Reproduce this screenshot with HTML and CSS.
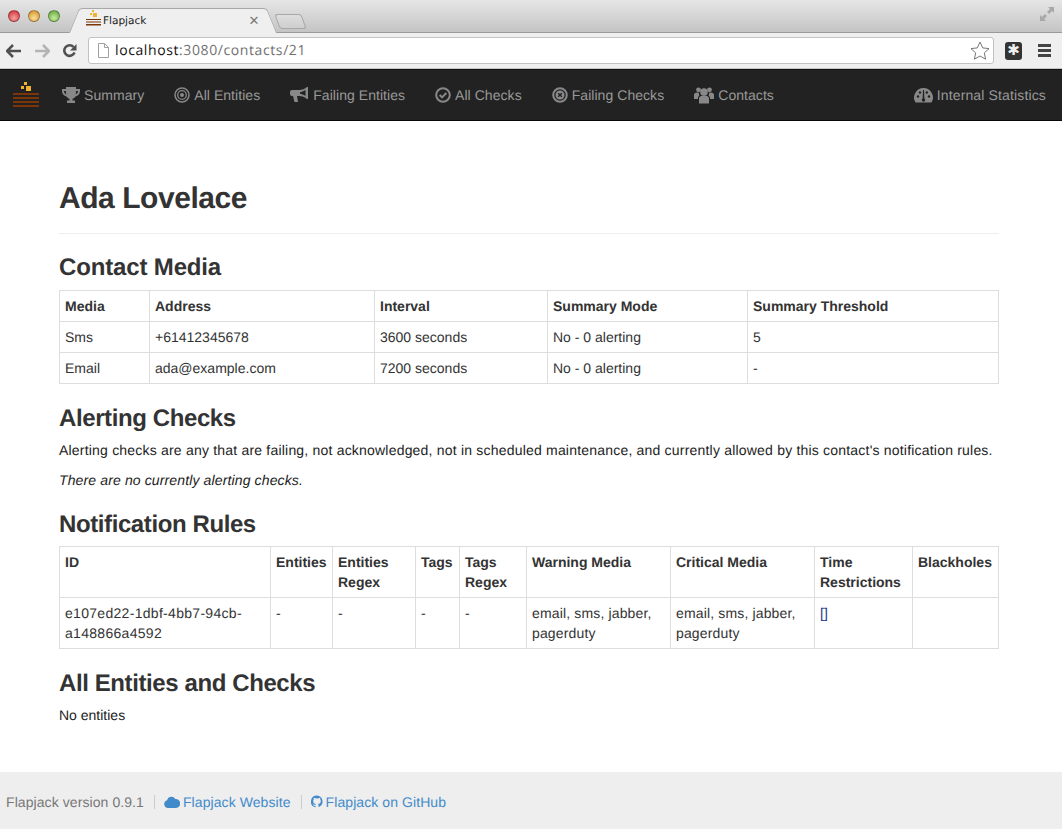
FILE: index.html
```html
<!DOCTYPE html>
<html lang="en">
<head>
    <meta charset="UTF-8">
    <meta name="viewport" content="width=device-width, initial-scale=1.0">
    <title>Flapjack</title>
    <link rel="stylesheet" href="styles.css">
</head>
<body>
    <div class="chrome">
        <div class="tabstrip">
            <div class="lights">
                <span class="light light-red"></span>
                <span class="light light-amber"></span>
                <span class="light light-green"></span>
            </div>
            <div class="tab">
                <svg class="favicon" width="15" height="17" viewBox="0 0 15 17">
                    <rect x="6" y="0" width="2" height="2" fill="#f0b030"/>
                    <rect x="4" y="3" width="2" height="2" fill="#f0b030"/>
                    <rect x="7" y="3" width="4" height="4" fill="#f0b030"/>
                    <rect x="0" y="9" width="15" height="1" fill="#7a3608"/>
                    <rect x="0" y="11.500" width="15" height="1" fill="#7a3608"/>
                    <rect x="0" y="14" width="15" height="1.500" fill="#7a3608"/>
                </svg>
                <span class="tab-title">Flapjack</span>
                <span class="tab-close">×</span>
            </div>
            <div class="newtab"></div>
            <svg class="fullscreen" width="16" height="16" viewBox="0 0 16 16">
                <path d="M9 1h6v6l-2-2-3 3-2-2 3-3zM7 15H1V9l2 2 3-3 2 2-3 3z" fill="#a8a8a8"/>
            </svg>
        </div>
        <div class="toolbar">
            <svg class="tool-btn" width="16" height="14" viewBox="0 0 16 14">
                <path d="M7 1 1 7l6 6M1.500 7H15" fill="none" stroke="#505050" stroke-width="2.600"/>
            </svg>
            <svg class="tool-btn" width="16" height="14" viewBox="0 0 16 14">
                <path d="M9 1l6 6-6 6M14.500 7H1" fill="none" stroke="#b4b4b4" stroke-width="2.600"/>
            </svg>
            <svg class="tool-btn" width="15" height="15" viewBox="0 0 15 15">
                <path d="M12.500 9.500A5.300 5.300 0 1 1 11.500 4" fill="none" stroke="#505050" stroke-width="2.600"/>
                <path d="M14.500 1v6.500H8z" fill="#505050"/>
            </svg>
            <div class="omnibox">
                <svg class="page-icon" width="13" height="15" viewBox="0 0 13 15">
                    <path d="M1.500.500h6l4 4v10h-10zM7.500.500v4h4" fill="#fff" stroke="#a0a0a0"/>
                </svg>
                <span class="url"><span class="url-host">localhost</span>:3080/contacts/21</span>
                <svg class="star" width="20" height="19" viewBox="0 0 20 19">
                    <path d="M10 1l2.700 5.900 6.300.700-4.700 4.300 1.300 6.300L10 15l-5.600 3.200 1.300-6.300L1 7.600l6.300-.700z" fill="#fff" stroke="#777"/>
                </svg>
            </div>
            <div class="ext-icon">✱</div>
            <div class="menu-icon"><span></span><span></span><span></span></div>
        </div>
    </div>

    <nav class="navbar">
        <svg class="brand" width="26" height="26" viewBox="0 0 26 26">
            <rect x="11" y="0" width="3" height="3" fill="#f0b030"/>
            <rect x="8" y="4" width="3" height="3" fill="#f0b030"/>
            <rect x="13" y="4" width="5" height="5" fill="#f0b030"/>
            <rect x="0" y="11" width="26" height="2" fill="#7a3608"/>
            <rect x="0" y="15" width="26" height="2" fill="#7a3608"/>
            <rect x="0" y="19" width="26" height="2" fill="#7a3608"/>
            <rect x="0" y="23" width="26" height="2" fill="#7a3608"/>
        </svg>
        <a class="nav-link nav-summary" href="#">
            <svg width="18" height="16" viewBox="0 0 18 16"><path d="M4 0h10v2h4v2c0 3-2 5-4.500 5.500C12.500 11 11 11.500 10.500 12v1.500H13V16H5v-2.500h2.500V12C7 11.500 5.500 11 4.500 9.500 2 9 0 7 0 4V2h4zM2 4c0 1.500.800 2.700 2.200 3.300C4 6.300 4 5 4 4zm14 0h-2c0 1 0 2.300-.200 3.300C15.200 6.700 16 5.500 16 4z" fill="#888"/></svg>
            Summary
        </a>
        <a class="nav-link" href="#">
            <svg width="16" height="16" viewBox="0 0 16 16"><circle cx="8" cy="8" r="7" fill="none" stroke="#888" stroke-width="1.500"/><circle cx="8" cy="8" r="4.300" fill="none" stroke="#888" stroke-width="1.300"/><circle cx="8" cy="8" r="2" fill="#888"/></svg>
            All Entities
        </a>
        <a class="nav-link" href="#">
            <svg width="19" height="16" viewBox="0 0 19 16"><path d="M17 0h1v12h-1c-2-2-5-3-8-3H7l1 6H4.500L3 9H2a2 2 0 0 1-2-2V5a2 2 0 0 1 2-2h7c3 0 6-1 8-3zm-1.500 3C13.500 4.300 11.500 5 10 5.200v1.600c1.500.200 3.500.900 5.500 2.200z" fill="#888"/></svg>
            Failing Entities
        </a>
        <a class="nav-link" href="#">
            <svg width="16" height="16" viewBox="0 0 16 16"><circle cx="8" cy="8" r="6.800" fill="none" stroke="#888" stroke-width="2"/><path d="M4.700 8l2.400 2.400 4.200-4.400" fill="none" stroke="#888" stroke-width="2"/></svg>
            All Checks
        </a>
        <a class="nav-link" href="#">
            <svg width="16" height="16" viewBox="0 0 16 16"><circle cx="8" cy="8" r="6.800" fill="none" stroke="#888" stroke-width="2"/><circle cx="8" cy="8" r="4.500" fill="#888"/><path d="M6.200 6.200l3.600 3.600M9.800 6.200l-3.600 3.600" stroke="#222" stroke-width="1.400"/></svg>
            Failing Checks
        </a>
        <a class="nav-link" href="#">
            <svg width="20" height="17" viewBox="0 0 20 17"><circle cx="10" cy="5" r="3.800" fill="#888"/><circle cx="4.500" cy="2.800" r="2.400" fill="#888"/><circle cx="15.500" cy="2.800" r="2.400" fill="#888"/><path d="M5 16.500v-5c0-2 2-3 5-3s5 1 5 3v5zM0 12V8c0-1.500 1-2.500 3.500-2.500.500 0 1 .2 1.300.4C5 8 6 8.500 4 10v2zM20 12V8c0-1.500-1-2.500-3.500-2.500-.500 0-1 .2-1.300.4-.2 2.100-1.200 2.600.800 4.100v2z" fill="#888"/></svg>
            Contacts
        </a>
        <a class="nav-link nav-stats" href="#">
            <svg width="19" height="16" viewBox="0 0 19 16"><path d="M9.500 1a9.500 9.500 0 0 1 8 14.500h-16A9.500 9.500 0 0 1 9.500 1z" fill="#888"/><g fill="#222"><circle cx="4" cy="9.500" r="1.200"/><circle cx="6" cy="5.500" r="1.200"/><circle cx="12.800" cy="5.500" r="1.200"/><circle cx="15" cy="9.500" r="1.200"/><path d="M9 3h1l.400 8.500a1.700 1.700 0 1 1-1.800 0z"/></g></svg>
            Internal Statistics
        </a>
    </nav>

    <main class="content">
        <h1 class="page-title">Ada Lovelace</h1>

        <h2 class="first-heading">Contact Media</h2>
        <table class="data-table media-table">
            <thead>
                <tr>
                    <th class="m-media">Media</th>
                    <th class="m-address">Address</th>
                    <th class="m-interval">Interval</th>
                    <th class="m-mode">Summary Mode</th>
                    <th>Summary Threshold</th>
                </tr>
            </thead>
            <tbody>
                <tr>
                    <td>Sms</td>
                    <td>+61412345678</td>
                    <td>3600 seconds</td>
                    <td>No - 0 alerting</td>
                    <td>5</td>
                </tr>
                <tr>
                    <td>Email</td>
                    <td>ada@example.com</td>
                    <td>7200 seconds</td>
                    <td>No - 0 alerting</td>
                    <td>-</td>
                </tr>
            </tbody>
        </table>

        <h2>Alerting Checks</h2>
        <p class="intro">Alerting checks are any that are failing, not acknowledged, not in scheduled maintenance, and currently allowed by this contact's notification rules.</p>
        <p class="empty-note">There are no currently alerting checks.</p>

        <h2>Notification Rules</h2>
        <table class="data-table rules-table">
            <thead>
                <tr>
                    <th class="r-id">ID</th>
                    <th class="r-entities">Entities</th>
                    <th class="r-regex">Entities Regex</th>
                    <th class="r-tags">Tags</th>
                    <th class="r-tags-regex">Tags Regex</th>
                    <th class="r-media">Warning Media</th>
                    <th class="r-media">Critical Media</th>
                    <th class="r-time">Time Restrictions</th>
                    <th>Blackholes</th>
                </tr>
            </thead>
            <tbody>
                <tr>
                    <td class="rule-id">e107ed22-1dbf-4bb7-94cb-a148866a4592</td>
                    <td>-</td>
                    <td>-</td>
                    <td>-</td>
                    <td>-</td>
                    <td>email, sms, jabber, pagerduty</td>
                    <td>email, sms, jabber, pagerduty</td>
                    <td><a class="rule-link" href="#">[]</a></td>
                    <td></td>
                </tr>
            </tbody>
        </table>

        <h2>All Entities and Checks</h2>
        <p>No entities</p>
    </main>

    <footer class="footer">
        <span class="version">Flapjack version 0.9.1</span>
        <span class="sep"></span>
        <a href="#">
            <svg width="16" height="12" viewBox="0 0 16 12"><path d="M4 12a4 4 0 0 1-1-7.800A4.500 4.500 0 0 1 11.300 3 4.500 4.500 0 0 1 12 12z" fill="#428bca"/></svg>
            Flapjack Website
        </a>
        <span class="sep"></span>
        <a href="#">
            <svg width="12" height="13" viewBox="0 0 12 13"><path d="M6 .500a6 6 0 0 0-1.900 11.700c.300 0 .400-.100.400-.300v-1.100c-1.700.400-2-.800-2-.800-.300-.700-.700-.900-.700-.900-.500-.400 0-.400 0-.400.600 0 .900.600.900.600.500.900 1.400.700 1.800.500 0-.400.200-.700.400-.800-1.300-.200-2.700-.700-2.700-3 0-.600.200-1.200.600-1.600 0-.200-.300-.800 0-1.600 0 0 .500-.200 1.700.600a5.800 5.800 0 0 1 3 0c1.200-.800 1.700-.600 1.700-.600.300.800.100 1.400 0 1.600.400.400.600 1 .600 1.600 0 2.300-1.400 2.800-2.700 3 .200.200.400.500.400 1.100v1.600c0 .200.100.300.400.300A6 6 0 0 0 6 .500z" fill="#428bca"/></svg>
            Flapjack on GitHub
        </a>
    </footer>
</body>
</html>
```

FILE: styles.css
```css
* {
    box-sizing: border-box;
}
html, body {
    margin: 0;
    padding: 0;
}
body {
    display: flex;
    flex-direction: column;
    min-height: 829px;
    font-family: "Liberation Sans", Arial, sans-serif;
    font-size: 14px;
    line-height: 20px;
    color: #333;
    background-color: #fff;
    text-rendering: geometricPrecision;
}
a {
    color: #428bca;
    text-decoration: none;
}

/* browser window */
.chrome {
    height: 69px;
    background: #efefef;
}
.tabstrip {
    display: flex;
    height: 33px;
    padding: 8px 7px 0 8px;
    background: linear-gradient(#e6e6e6, #c4c4c4);
    border-bottom: 1px solid #9a9a9a;
}
.lights {
    display: flex;
    gap: 8px;
    padding-top: 2px;
}
.light {
    width: 12px;
    height: 12px;
    border-radius: 50%;
    border: 1px solid rgba(0, 0, 0, 0.3);
}
.light-red {
    background: radial-gradient(circle at 50% 70%, #f6a0a0, #d0242c);
}
.light-amber {
    background: radial-gradient(circle at 50% 70%, #fbe09a, #d08a1c);
}
.light-green {
    background: radial-gradient(circle at 50% 70%, #c8eca0, #5aa030);
}
.tab {
    position: relative;
    display: flex;
    align-items: center;
    width: 198px;
    height: 25px;
    margin-left: 14px;
    padding: 0 13px 0 12px;
}
.tab::before, .tab::after {
    content: "";
    position: absolute;
    top: 0;
    bottom: 0;
    width: 55%;
    background: #efefef;
    border-top: 1px solid #a8a8a8;
}
.tab::before {
    left: 0;
    border-left: 1px solid #a8a8a8;
    border-radius: 4px 0 0 0;
    transform: skewX(-22deg);
}
.tab::after {
    right: 0;
    border-right: 1px solid #a8a8a8;
    border-radius: 0 4px 0 0;
    transform: skewX(22deg);
}
.favicon, .tab-title, .tab-close {
    position: relative;
    z-index: 1;
}
.favicon {
    margin: -5px 2px 0 0;
}
.tab-title {
    flex: 1;
    font-family: "DejaVu Sans", sans-serif;
    font-size: 10.500px;
    color: #222;
}
.tab-close {
    font-size: 17px;
    color: #777;
}
.newtab {
    width: 27px;
    height: 15px;
    margin: 6px 0 0 5px;
    background: linear-gradient(#dedede, #cecece);
    border: 1px solid #a8a8a8;
    border-radius: 3px;
    transform: skewX(20deg);
}
.fullscreen {
    margin: -2px 0 0 auto;
}
.toolbar {
    display: flex;
    align-items: center;
    height: 36px;
    padding: 0 10px 0 6px;
    border-bottom: 1px solid #c4c4c4;
}
.tool-btn {
    margin-right: 12px;
}
.omnibox {
    display: flex;
    align-items: center;
    width: 906px;
    height: 27px;
    margin-left: -1px;
    padding: 0 3px 0 8px;
    background: #fff;
    border: 1px solid #c2c2c2;
    border-radius: 3px;
}
.page-icon {
    margin-right: 5px;
}
.url {
    flex: 1;
    font-family: "Open Sans", sans-serif;
    font-size: 14px;
    letter-spacing: 0.6px;
    color: #707070;
}
.url-host {
    color: #111;
}
.ext-icon {
    width: 17px;
    height: 18px;
    margin-left: 11px;
    text-align: center;
    font-size: 15px;
    line-height: 18px;
    color: #eee;
    background: #333;
    border-radius: 3px;
}
.menu-icon {
    display: flex;
    flex-direction: column;
    gap: 2px;
    width: 13px;
    margin-left: 16px;
}
.menu-icon span {
    height: 3px;
    background: #444;
}

/* navbar */
.navbar {
    display: flex;
    align-items: center;
    gap: 30px;
    height: 52px;
    padding: 0 16px 0 13px;
    background-color: #222;
    border-top: 1px solid #111;
    border-bottom: 1px solid #080808;
}
.nav-link {
    display: flex;
    align-items: center;
    gap: 4px;
    letter-spacing: 0.05px;
    color: #999;
}
.brand {
    margin: -1px -7px 0 0;
}
.nav-stats {
    margin-left: auto;
    letter-spacing: 0.14px;
}

/* page content */
.content {
    padding: 0 63px 0 59px;
}
h1, h2 {
    margin: 0;
    font-weight: bold;
}
.page-title {
    margin-top: 61px;
    padding-bottom: 18px;
    font-size: 30px;
    line-height: 33px;
    letter-spacing: -0.45px;
    border-bottom: 1px solid #eee;
}
h2 {
    margin: 22px 0 8px;
    font-size: 24px;
    line-height: 26px;
    letter-spacing: -0.4px;
}
.first-heading {
    margin: 21px 0 9px;
    letter-spacing: -0.15px;
}
p {
    margin: 0 0 10px;
    color: #222;
}
.intro {
    letter-spacing: 0.2px;
}
.empty-note {
    font-style: italic;
    letter-spacing: 0.13px;
}
.data-table {
    width: 940px;
    border-collapse: collapse;
    table-layout: fixed;
}
.data-table th, .data-table td {
    padding: 5px;
    text-align: left;
    vertical-align: top;
    border: 1px solid #ddd;
}
.data-table th {
    font-weight: bold;
}
.rules-table td {
    letter-spacing: 0.15px;
}
.rules-table .rule-id {
    letter-spacing: 0.3px;
}
.rule-link {
    color: #1a3a8a;
}
.m-media { width: 90px; }
.m-address { width: 225px; }
.m-interval { width: 173px; }
.m-mode { width: 200px; }
.r-id { width: 211px; }
.r-entities { width: 62px; }
.r-regex { width: 83px; }
.r-tags { width: 44px; }
.r-tags-regex { width: 67px; }
.r-media { width: 144px; }
.r-time { width: 98px; }

/* footer */
.footer {
    display: flex;
    align-items: center;
    height: 57px;
    margin-top: auto;
    padding: 2px 0 0 6px;
    letter-spacing: 0.08px;
    background-color: #eee;
    color: #777;
}
.footer a {
    display: flex;
    align-items: center;
    gap: 3px;
}
.sep {
    width: 1px;
    height: 14px;
    margin: 0 9px 0 10px;
    background: #ccc;
}
```
